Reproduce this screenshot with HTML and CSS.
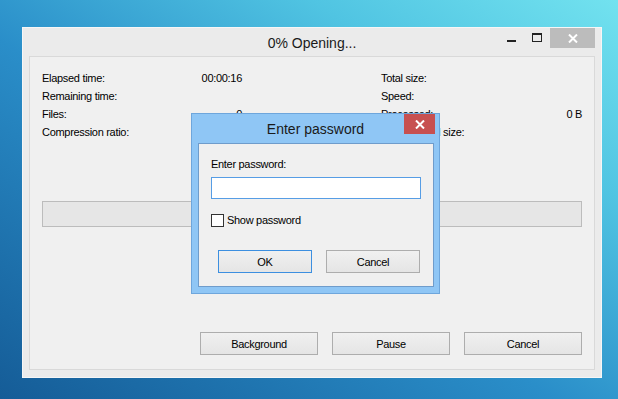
FILE: index.html
```html
<!DOCTYPE html>
<html lang="en">
<head>
    <meta charset="UTF-8">
    <title>0% Opening...</title>
    <link rel="stylesheet" href="styles.css">
</head>
<body>
    <div class="window">
        <div class="titlebar">
            <span class="title">0% Opening...</span>
            <div class="controls">
                <span class="ctl min"><i></i></span>
                <span class="ctl max"><i></i></span>
                <span class="ctl close">
                    <svg width="10" height="9" viewBox="0 0 10 9"><path d="M1 0.5 L9 8.5 M9 0.5 L1 8.5" stroke="#fff" stroke-width="2"/></svg>
                </span>
            </div>
        </div>
        <div class="panel">
            <div class="stats">
                <div class="col">
                    <div class="row"><span>Elapsed time:</span><span>00:00:16</span></div>
                    <div class="row"><span>Remaining time:</span><span></span></div>
                    <div class="row"><span>Files:</span><span>0</span></div>
                    <div class="row"><span>Compression ratio:</span><span></span></div>
                </div>
                <div class="col">
                    <div class="row"><span>Total size:</span><span></span></div>
                    <div class="row"><span>Speed:</span><span></span></div>
                    <div class="row"><span>Processed:</span><span>0 B</span></div>
                    <div class="row"><span>Compressed size:</span><span></span></div>
                </div>
            </div>
            <div class="progress"></div>
            <div class="actions">
                <button class="btn">Background</button>
                <button class="btn">Pause</button>
                <button class="btn">Cancel</button>
            </div>
        </div>

        <!-- boite de dialogue du mot de passe -->
        <div class="dialog">
            <div class="dlg-title">
                <span></span>
                <span class="title">Enter password</span>
                <span class="dlg-close">
                    <svg width="10" height="9" viewBox="0 0 10 9"><path d="M1 0.5 L9 8.5 M9 0.5 L1 8.5" stroke="#fff" stroke-width="2"/></svg>
                </span>
            </div>
            <div class="dlg-body">
                <div class="label">Enter password:</div>
                <input class="pwd" type="password">
                <label class="check"><span class="box"></span>Show password</label>
                <div class="dlg-actions">
                    <button class="btn default">OK</button>
                    <button class="btn">Cancel</button>
                </div>
            </div>
        </div>
    </div>
</body>
</html>
```
FILE: styles.css
```css
html, body {
    margin: 0;
    height: 100%;
}
body {
    width: 618px;
    height: 399px;
    overflow: hidden;
    font-family: "Segoe UI", "Liberation Sans", Arial, sans-serif;
    font-size: 11px;
    letter-spacing: -0.3px;
    color: #000;
    background: linear-gradient(to top right, #155c97 0%, #2a8ec9 45%, #50c4e2 75%, #72e2ef 100%);
    padding-top: 27px;
    box-sizing: border-box;
}
.window {
    position: relative;
    margin-left: 22px;
    width: 580px;
    height: 351px;
    box-sizing: border-box;
    border: 1px solid #f6f6f6;
    background-color: #ebebeb;
    display: flex;
    flex-direction: column;
}
.titlebar {
    height: 28px;
    display: grid;
    grid-template-columns: 1fr auto 1fr;
    align-items: start;
}
.titlebar .title {
    grid-column: 2;
    font-size: 14px;
    letter-spacing: 0;
    line-height: 30px;
    color: #1a1a1a;
}
.controls {
    grid-column: 3;
    justify-self: end;
    display: flex;
    margin-right: 6px;
}
.ctl {
    width: 26px;
    height: 20px;
    display: flex;
    align-items: center;
    justify-content: center;
}
.ctl.min i {
    width: 9px;
    height: 2px;
    margin-top: 6px;
    background-color: #222;
}
.ctl.max i {
    width: 10px;
    height: 9px;
    box-sizing: border-box;
    border: 1px solid #222;
    border-top-width: 2px;
    margin-top: -2px;
}
.ctl.close {
    width: 45px;
    background-color: #bcbcbc;
}
.panel {
    margin: 0 6px 7px 6px;
    flex: 1;
    border: 1px solid #d9d9d9;
    background-color: #f0f0f0;
    padding: 12px 12px 14px 12px;
    display: flex;
    flex-direction: column;
}
.stats {
    display: flex;
    justify-content: space-between;
}
.col {
    width: 200px;
}
.col:last-child {
    width: 201px;
}
.row {
    display: flex;
    justify-content: space-between;
    height: 18px;
    line-height: 18px;
}
.progress {
    margin-top: 60px;
    height: 26px;
    box-sizing: border-box;
    border: 1px solid #bcbcbc;
    background-color: #e6e6e6;
}
.actions {
    margin-top: auto;
    display: flex;
    justify-content: flex-end;
    gap: 14px;
}
.btn {
    width: 118px;
    height: 23px;
    font-family: inherit;
    font-size: 11px;
    letter-spacing: -0.3px;
    color: #000;
    border: 1px solid #adadad;
    background: linear-gradient(#f0f0f0, #e5e5e5);
    padding: 0;
    border-radius: 0;
}
.dialog {
    position: absolute;
    left: 168px;
    top: 85px;
    width: 249px;
    height: 181px;
    box-sizing: border-box;
    border: 1px solid #6ea6dc;
    background-color: #8fc6f5;
    display: flex;
    flex-direction: column;
}
.dlg-title {
    height: 29px;
    display: grid;
    grid-template-columns: 1fr auto 1fr;
    align-items: start;
}
.dlg-title .title {
    font-size: 14px;
    letter-spacing: 0;
    line-height: 30px;
    color: #1a1a1a;
}
.dlg-close {
    justify-self: end;
    margin-right: 4px;
    width: 31px;
    height: 20px;
    background-color: #c75050;
    display: flex;
    align-items: center;
    justify-content: center;
}
.dlg-body {
    margin: 0 5px 6px 6px;
    flex: 1;
    border: 1px solid #6f9ccb;
    background-color: #f0f0f0;
    padding: 12px 12px 0 12px;
}
.label {
    line-height: 16px;
}
.pwd {
    display: block;
    margin-top: 5px;
    width: 210px;
    height: 22px;
    box-sizing: border-box;
    border: 1px solid #569de5;
    background: #fff;
    padding: 0 3px;
    outline: none;
}
.check {
    display: flex;
    align-items: center;
    gap: 3px;
    margin-top: 15px;
    height: 13px;
    line-height: 13px;
}
.check .box {
    width: 13px;
    height: 13px;
    box-sizing: border-box;
    border: 1px solid #333;
    background: #fff;
}
.dlg-actions {
    margin-top: 23px;
    padding-right: 1px;
    display: flex;
    justify-content: flex-end;
    gap: 14px;
}
.dlg-actions .btn {
    width: 94px;
}
.btn.default {
    border-color: #3c8fe0;
}
```
